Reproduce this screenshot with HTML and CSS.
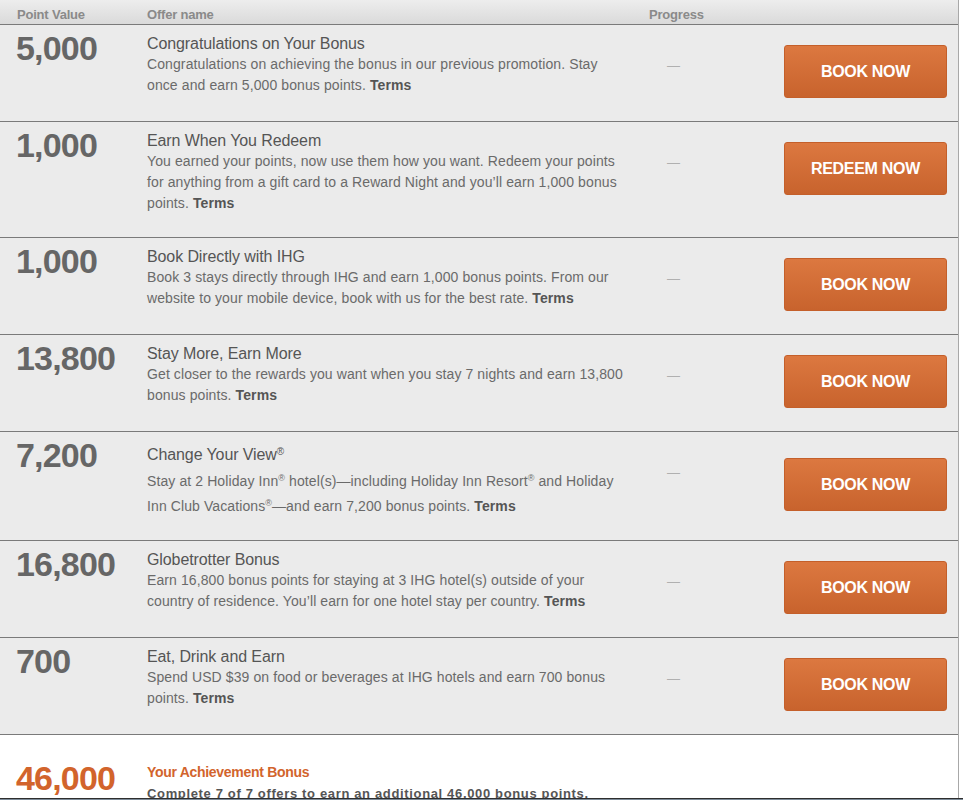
FILE: index.html
```html
<!DOCTYPE html>
<html lang="en">
<head>
<meta charset="utf-8">
<title>Offers</title>
<link rel="stylesheet" href="styles.css">
</head>
<body>
<div class="offers">
  <div class="head">
    <div class="col-pts">Point Value</div>
    <div class="col-offer">Offer name</div>
    <div class="col-prog">Progress</div>
    <div class="col-act"></div>
  </div>

  <div class="row">
    <div class="col-pts pts">5,000</div>
    <div class="col-offer">
      <div class="title">Congratulations on Your Bonus</div>
      <p class="desc">Congratulations on achieving the bonus in our previous promotion. Stay once and earn 5,000 bonus points. <b class="terms">Terms</b></p>
    </div>
    <div class="col-prog"><span class="dash">—</span></div>
    <div class="col-act"><a class="btn">BOOK NOW</a></div>
  </div>

  <div class="row">
    <div class="col-pts pts">1,000</div>
    <div class="col-offer">
      <div class="title">Earn When You Redeem</div>
      <p class="desc">You earned your points, now use them how you want. Redeem your points for anything from a gift card to a Reward Night and you’ll earn 1,000 bonus points. <b class="terms">Terms</b></p>
    </div>
    <div class="col-prog"><span class="dash">—</span></div>
    <div class="col-act"><a class="btn">REDEEM NOW</a></div>
  </div>

  <div class="row">
    <div class="col-pts pts">1,000</div>
    <div class="col-offer">
      <div class="title">Book Directly with IHG</div>
      <p class="desc">Book 3 stays directly through IHG and earn 1,000 bonus points. From our website to your mobile device, book with us for the best rate. <b class="terms">Terms</b></p>
    </div>
    <div class="col-prog"><span class="dash">—</span></div>
    <div class="col-act"><a class="btn">BOOK NOW</a></div>
  </div>

  <div class="row">
    <div class="col-pts pts">13,800</div>
    <div class="col-offer">
      <div class="title">Stay More, Earn More</div>
      <p class="desc">Get closer to the rewards you want when you stay 7 nights and earn 13,800 bonus points. <b class="terms">Terms</b></p>
    </div>
    <div class="col-prog"><span class="dash">—</span></div>
    <div class="col-act"><a class="btn">BOOK NOW</a></div>
  </div>

  <div class="row row--sup">
    <div class="col-pts pts">7,200</div>
    <div class="col-offer">
      <div class="title">Change Your View<sup class="reg">®</sup></div>
      <p class="desc">Stay at 2 Holiday Inn<sup class="reg">®</sup> hotel(s)—including Holiday Inn Resort<sup class="reg">®</sup> and Holiday Inn Club Vacations<sup class="reg">®</sup>—and earn 7,200 bonus points. <b class="terms">Terms</b></p>
    </div>
    <div class="col-prog"><span class="dash">—</span></div>
    <div class="col-act"><a class="btn">BOOK NOW</a></div>
  </div>

  <div class="row">
    <div class="col-pts pts">16,800</div>
    <div class="col-offer">
      <div class="title">Globetrotter Bonus</div>
      <p class="desc">Earn 16,800 bonus points for staying at 3 IHG hotel(s) outside of your country of residence. You’ll earn for one hotel stay per country. <b class="terms">Terms</b></p>
    </div>
    <div class="col-prog"><span class="dash">—</span></div>
    <div class="col-act"><a class="btn">BOOK NOW</a></div>
  </div>

  <div class="row">
    <div class="col-pts pts">700</div>
    <div class="col-offer">
      <div class="title">Eat, Drink and Earn</div>
      <p class="desc">Spend USD $39 on food or beverages at IHG hotels and earn 700 bonus points. <b class="terms">Terms</b></p>
    </div>
    <div class="col-prog"><span class="dash">—</span></div>
    <div class="col-act"><a class="btn">BOOK NOW</a></div>
  </div>

  <div class="bonus">
    <div class="col-pts pts pts--accent">46,000</div>
    <div class="col-offer">
      <div class="bonus-title">Your Achievement Bonus</div>
      <p class="bonus-desc">Complete 7 of 7 offers to earn an additional 46,000 bonus points.</p>
    </div>
  </div>
</div>
<div class="edge"></div>
</body>
</html>
```

FILE: styles.css
```css
html, body {
  margin: 0;
  padding: 0;
  background: #ffffff;
}

body {
  font-family: "Liberation Sans", Arial, sans-serif;
  color: #666;
  overflow: hidden;
}

.offers {
  width: 958px;
  border-right: 1px solid #a8a8a8;
  height: 798px;
  overflow: hidden;
}

.head {
  display: flex;
  height: 24px;
  border-bottom: 1px solid #7a7a7a;
  background: linear-gradient(#ededed, #dadada);
  font-size: 13px;
  font-weight: bold;
  color: #8a8a8a;
  line-height: 29px;
  letter-spacing: -0.2px;
}

.head .col-pts { padding-left: 17px; width: 130px; }

.col-pts {
  width: 131px;
  padding-left: 16px;
  flex: none;
}

.col-offer {
  width: 484px;
  padding-right: 18px;
  flex: none;
}

.col-prog {
  width: 135px;
  flex: none;
}

.col-act {
  flex: 1;
  padding-right: 11px;
  padding-bottom: 23px;
  display: flex;
  justify-content: flex-end;
  align-items: flex-start;
}

.row {
  display: flex;
  background: #ebebeb;
  border-bottom: 1px solid #7a7a7a;
}

.pts {
  font-size: 34px;
  font-weight: bold;
  line-height: 40px;
  letter-spacing: -0.8px;
  color: #666;
  padding-top: 3px;
}

.row .col-offer {
  padding-top: 9px;
  padding-bottom: 23px;
}

.title {
  font-size: 16px;
  line-height: 20px;
  color: #555;
  letter-spacing: -0.1px;
}

.desc {
  margin: 0;
  font-size: 14px;
  line-height: 21px;
  color: #6a6a6a;
  letter-spacing: 0.1px;
}

.terms {
  color: #555;
}

.reg {
  font-size: 10px;
  line-height: 22px;
  vertical-align: 5px;
}

.desc .reg {
  font-size: 9px;
  vertical-align: 5px;
}

.row--sup .desc {
  padding-top: 2px;
}

.dash {
  display: block;
  padding-top: 30px;
  padding-left: 18px;
  font-size: 13px;
  line-height: 21px;
  color: #b0b0b0;
}

.btn {
  display: flex;
  align-items: center;
  justify-content: center;
  box-sizing: border-box;
  width: 163px;
  height: 53px;
  margin-top: 20px;
  border-radius: 3px;
  border: 1px solid #c45f2a;
  background: linear-gradient(#dc7840, #c8632d);
  color: #fff;
  font-size: 16px;
  font-weight: bold;
  letter-spacing: -0.3px;
  text-decoration: none;
}

.row--sup .btn {
  margin-top: 26px;
}

.bonus {
  display: flex;
  background: #fff;
}

.pts--accent {
  color: #d2642c;
  padding-top: 23px;
}

.bonus .col-offer {
  padding-top: 28px;
}

.bonus-title {
  font-size: 14px;
  font-weight: bold;
  line-height: 18px;
  color: #d2642c;
  letter-spacing: -0.3px;
}

.bonus-desc {
  margin: 0;
  font-size: 13px;
  font-weight: bold;
  line-height: 26px;
  color: #555;
  letter-spacing: 0.65px;
  white-space: nowrap;
}

.edge {
  height: 1px;
  border-top: 1px solid #2e2e2e;
  background: #7d8b98;
}
```
